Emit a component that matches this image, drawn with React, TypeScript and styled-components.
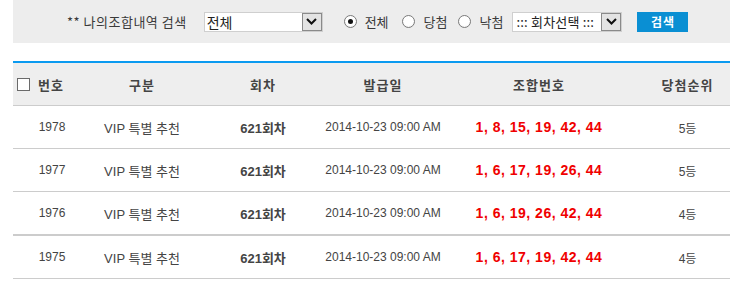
import React from "react";
import styled, { createGlobalStyle } from "styled-components";

const Global = createGlobalStyle`
  html, body { margin: 0; padding: 0; background: #fff; }
  body { font-family: "Liberation Sans", "Noto Sans CJK KR", sans-serif; color: #444; overflow: hidden; }
`;

const Page = styled.div`
  width: 717px;
  padding-left: 13px;
`;

const SearchBar = styled.div`
  height: 43px;
  background: #ededed;
  display: flex;
  align-items: center;
  padding-left: 54px;
  font-size: 13px;
  color: #444;
`;

const Label = styled.span<{ $mr?: number; $ml?: number; $ls?: number }>`
  margin-left: ${(p) => p.$ml ?? 0}px;
  margin-right: ${(p) => p.$mr ?? 0}px;
  letter-spacing: ${(p) => p.$ls ?? 0}px;
  white-space: nowrap;
  font-family: "Noto Sans CJK KR", "Liberation Sans", sans-serif;
  line-height: 1;
  color: #3a3a3a;
`;

const SelectBox = styled.div<{ $w: number; $ml: number }>`
  width: ${(p) => p.$w}px;
  height: 20px;
  margin-left: ${(p) => p.$ml}px;
  box-sizing: border-box;
  border: 1px solid #cfcfcf;
  background: #fff;
  display: flex;
  align-items: stretch;
`;

const SelectText = styled.span<{ $size: number; $ls?: number; $pl?: number }>`
  flex: 1;
  padding-left: ${(p) => p.$pl ?? 2}px;
  font-family: "Noto Sans CJK KR", "Liberation Sans", sans-serif;
  font-size: ${(p) => p.$size}px;
  letter-spacing: ${(p) => p.$ls ?? 0}px;
  line-height: 18px;
  color: #222;
  white-space: nowrap;
  overflow: hidden;
`;

const ArrowBox = styled.span`
  width: 20px;
  flex: none;
  box-sizing: border-box;
  border: 1px solid #8a8a8a;
  background: #e3e3e3;
  display: flex;
  align-items: center;
  justify-content: center;
`;

const Radio = styled.span<{ $checked?: boolean; $ml: number }>`
  width: 13px;
  height: 13px;
  margin-left: ${(p) => p.$ml}px;
  box-sizing: border-box;
  border-radius: 50%;
  border: 1px solid #7a7a7a;
  background: radial-gradient(circle at 50% 40%, #fff 55%, #e6e6e6 100%);
  display: inline-flex;
  align-items: center;
  justify-content: center;
  &::after {
    content: "";
    width: 5px;
    height: 5px;
    border-radius: 50%;
    background: ${(p) => (p.$checked ? "#111" : "transparent")};
  }
`;

const SearchButton = styled.button`
  margin-left: 15px;
  width: 51px;
  height: 20px;
  border: 0;
  padding: 0;
  background: #0a8fd3;
  color: #fff;
  font-family: "Noto Sans CJK KR", sans-serif;
  font-weight: 700;
  font-size: 12px;
  letter-spacing: 1px;
  line-height: 20px;
`;

const Table = styled.div`
  margin-top: 18px;
  border-top: 2px solid #0a9af0;
`;

const cols = "78px 102px 140px 100px 212px 1fr";

const HeadRow = styled.div`
  display: grid;
  grid-template-columns: ${cols};
  height: 42px;
  background: #eeeeee;
  border-bottom: 1px solid #cccccc;
`;

const HeadCell = styled.div<{ $start?: boolean }>`
  display: flex;
  align-items: center;
  justify-content: ${(p) => (p.$start ? "flex-start" : "center")};
  padding-left: ${(p) => (p.$start ? 4 : 0)}px;
  gap: 8px;
  font-family: "Noto Sans CJK KR", sans-serif;
  font-weight: 700;
  font-size: 13px;
  letter-spacing: 1px;
  color: #444;
  white-space: nowrap;
`;

const CheckBox = styled.span`
  width: 13px;
  height: 13px;
  box-sizing: border-box;
  border: 1px solid #6a6a6a;
  background: #fff;
  margin-top: 1px;
`;

const Row = styled.div<{ $thick?: boolean }>`
  display: grid;
  grid-template-columns: ${cols};
  height: 42px;
  border-bottom: ${(p) => (p.$thick ? 2 : 1)}px solid #cccccc;
`;

const Cell = styled.div<{ $size?: number; $bold?: boolean; $red?: boolean }>`
  display: flex;
  align-items: center;
  justify-content: center;
  white-space: nowrap;
  font-size: ${(p) => p.$size ?? 12}px;
  font-weight: ${(p) => (p.$bold ? 700 : 400)};
  color: ${(p) => (p.$red ? "#f00000" : "#444")};
  letter-spacing: ${(p) => (p.$red ? "0.5px" : "0")};
`;

const Chevron = () => (
  <svg width="11" height="7" viewBox="0 0 11 7">
    <path d="M1 1 L5.5 5.5 L10 1" fill="none" stroke="#111" strokeWidth="2" />
  </svg>
);

const rows = [
  { no: 1978, nums: "1, 8, 15, 19, 42, 44", rank: "5등" },
  { no: 1977, nums: "1, 6, 17, 19, 26, 44", rank: "5등" },
  { no: 1976, nums: "1, 6, 19, 26, 42, 44", rank: "4등", thick: true },
  { no: 1975, nums: "1, 6, 17, 19, 42, 44", rank: "4등" },
];

export default function App() {
  return (
    <>
      <Global />
      <Page>
        <SearchBar>
          <Label $ls={0.5}>** 나의조합내역 검색</Label>
          <SelectBox $w={119} $ml={17}>
            <SelectText $size={14}>전체</SelectText>
            <ArrowBox>
              <Chevron />
            </ArrowBox>
          </SelectBox>
          <Radio $checked $ml={21} />
          <Label $ml={8}>전체</Label>
          <Radio $ml={13} />
          <Label $ml={9}>당첨</Label>
          <Radio $ml={10} />
          <Label $ml={9}>낙첨</Label>
          <SelectBox $w={110} $ml={9}>
            <SelectText $size={13} $ls={0.2} $pl={3}>::: 회차선택 :::</SelectText>
            <ArrowBox>
              <Chevron />
            </ArrowBox>
          </SelectBox>
          <SearchButton>검색</SearchButton>
        </SearchBar>
        <Table>
          <HeadRow>
            <HeadCell $start>
              <CheckBox />
              번호
            </HeadCell>
            <HeadCell>구분</HeadCell>
            <HeadCell>회차</HeadCell>
            <HeadCell>발급일</HeadCell>
            <HeadCell>조합번호</HeadCell>
            <HeadCell>당첨순위</HeadCell>
          </HeadRow>
          {rows.map((r) => (
            <Row key={r.no} $thick={r.thick}>
              <Cell>{r.no}</Cell>
              <Cell $size={13}>VIP 특별 추천</Cell>
              <Cell $size={13} $bold>
                621회차
              </Cell>
              <Cell>2014-10-23 09:00 AM</Cell>
              <Cell $size={14} $bold $red>
                {r.nums}
              </Cell>
              <Cell>{r.rank}</Cell>
            </Row>
          ))}
        </Table>
      </Page>
    </>
  );
}
